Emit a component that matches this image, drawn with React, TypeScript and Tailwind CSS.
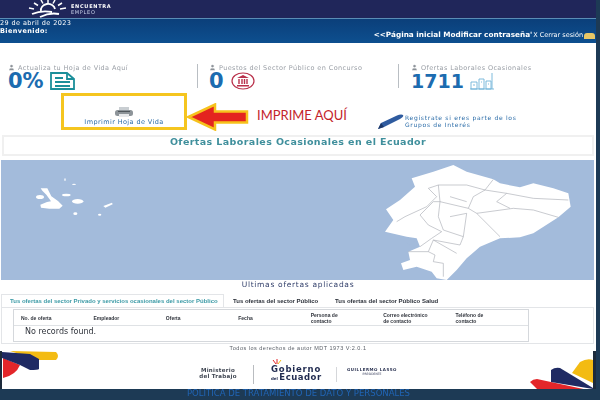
import { User } from "lucide-react"

const columns = [
    ["No. de oferta"],
    ["Empleador"],
    ["Oferta"],
    ["Fecha"],
    ["Persona de", "contacto"],
    ["Correo electrónico", "de contacto"],
    ["Teléfono de", "contacto"],
]

const Sun = () => (
    <svg width="40" height="18" viewBox="0 0 40 18" fill="none" stroke="#fff" strokeWidth="1.5">
        <path d="M13 0l2 3.500M20 0v3.500M27 0l-2 3.500M34 3l-4 2.500M6 3l4 2.500M1 8l5 1M38 8l-6 1" />
        <path d="M13 11a7 6 0 0 1 14-2" strokeWidth="1.800" />
        <path d="M4 14c7-3 15-3 20-2M12 17c6-3 14-4 19-3" strokeWidth="1.800" />
    </svg>
)

const DocIcon = () => (
    <svg width="26" height="18" viewBox="0 0 26 18" fill="none" stroke="#1b8f9a" strokeWidth="1.8">
        <path d="M1 1h16l7 6v10H1z" />
        <path d="M17 1v6h7M5 6h8M5 10h15M5 14h15" />
    </svg>
)

const BankIcon = () => (
    <svg width="24" height="18" viewBox="0 0 24 18" fill="none">
        <ellipse cx="12" cy="9" rx="11" ry="8" stroke="#b9304a" strokeWidth="1.2" />
        <path d="M12 3l6 3H6zM6 13h12v1.500H6z" fill="#b9304a" />
        <path d="M8 7v5M11 7v5M13.500 7v5M16 7v5" stroke="#b9304a" strokeWidth="1.4" />
    </svg>
)

const ChartIcon = () => (
    <svg width="26" height="18" viewBox="0 0 26 18" fill="none" stroke="#6fb3d8" strokeWidth="0.9">
        <path d="M1 17h24M2 10h6v7H2zM10 7h5v10h-5zM17 9h5v8h-5zM23 1v16M4 13h2M12 10h1M19 12h1" />
    </svg>
)

const Printer = () => (
    <svg width="20" height="11" viewBox="0 0 20 11">
        <path d="M5 0h10v3H5z" fill="#c9ced2" />
        <rect x="1" y="3" width="18" height="6" rx="2.5" fill="#8d9499" />
        <path d="M5 7h10v3H5z" fill="#e6e8ea" />
        <path d="M4 4.500h12" stroke="#4f565b" />
    </svg>
)

const Arrow = () => (
    <svg width="62" height="28" viewBox="0 0 62 28" className="mt-[10px]">
        <path d="M1.500 14L28 1.500v7h32v11H28v7z" fill="#e4231f" stroke="#f6c21c" strokeWidth="2.500" />
    </svg>
)

const Pen = () => (
    <svg width="27" height="16" viewBox="0 0 27 16">
        <path d="M1 15l3-6L20 1.500c2-1 5-1.500 6-.5s-1 3-3 4L7 13z" fill="#2f5b9f" />
        <path d="M1 15l3-6 3 4z" fill="#1c3768" />
    </svg>
)

const EcuadorMap = () => (
    <svg className="w-full h-full block" viewBox="0 0 1779 360">
        <rect width="1779" height="360" fill="#a3bbdb" />
        {/* galapagos */}
        <g fill="#fff" transform="translate(-3,-90)">
            <path d="M122 175l20 0 12 24 20 14 14 14-10 9-30 0-25-3-2-9 20-8 12-2-14-20-12-12z" />
            <ellipse cx="120" cy="201" rx="12" ry="6" />
            <ellipse cx="199" cy="195" rx="13" ry="4" />
            <ellipse cx="233" cy="214" rx="17" ry="7" />
            <path d="M310 228l26-10 2 5-22 10z" />
            <ellipse cx="226" cy="251" rx="6" ry="4" />
            <ellipse cx="222" cy="163" rx="6" ry="2" />
            <ellipse cx="299" cy="254" rx="5" ry="3" />
            <ellipse cx="195" cy="149" rx="2" ry="4" />
        </g>
        {/* continente */}
        <g transform="translate(897,-90)">
            <path
                fill="#fff"
                d="M460 105L500 125 580 148 600 160 660 172 700 160 760 175 805 190 812 230 775 262 700 310 660 322 600 325 540 350 500 385 470 420 440 450 410 445 395 425 350 410 310 420 303 400 330 390 325 365 360 350 350 325 320 320 255 305 280 270 258 238 300 210 345 170 335 145 400 125z"
            />
            <path
                fill="none"
                stroke="#a4a8b0"
                strokeWidth="1.800"
                d="M580 148L555 180 500 165 415 165 385 175M555 180L520 200 505 235 530 250 640 235 700 240 775 262M530 250L600 320M505 235L420 215 400 215 360 255 385 285 425 305 395 325 360 350M420 215L415 260 430 300 490 320 480 345 400 330 385 365 405 375 400 395 430 400 430 440M490 320L500 250 450 260M385 175L410 200 380 230 315 260 290 275M555 180L620 190 590 215 630 235M620 190L700 205 805 210M325 365L385 365M470 370L400 330M415 165L420 215M450 200L500 215"
            />
            <path fill="#a3bbdb" d="M320 332l22-6 2 8-14 12-8-4z" />
        </g>
    </svg>
)

const CornerLeft = () => (
    <svg width="60" height="30" viewBox="0 0 60 30">
        <path d="M8 0L54 1Q58 5 54 9L36 9z" fill="#f3bb12" />
        <path d="M1 7L18 14Q14 24 1 27z" fill="#e3262a" />
        <path d="M0 1L28 3 37 8 37 18Q36 19 28 19L18 14 0 7z" fill="#1f2a63" />
    </svg>
)

const CornerRight = () => (
    <svg width="66" height="39" viewBox="0 0 66 39">
        <path d="M45 22L53 11Q60 7 66 9L66 32z" fill="#f3bb12" />
        <path d="M3 31Q6 28 10 28L61 39 11 39z" fill="#e3262a" />
        <path d="M24 19Q28 16 33 17L66 37 66 38 24 31z" fill="#1f2a63" />
    </svg>
)

const GobiernoMark = () => (
    <svg width="10" height="6" viewBox="0 0 10 6">
        <path d="M1 1l3 4M5 0v5" stroke="#e3262a" strokeWidth="1" />
        <path d="M9 1L6 5" stroke="#f3bb12" strokeWidth="1" />
    </svg>
)

export default function App() {
    return (
        <div className="w-[600px] h-[400px] overflow-hidden flex flex-col bg-[#1d3a55] font-['Liberation_Sans',sans-serif]">
            <div className="flex-1 min-h-0 flex flex-col w-[596px]">
                {/* cabecera */}
                <header className="h-[18px] bg-[#20265a] flex items-center pl-[28px] gap-[3px]">
                    <Sun />
                    <div className="text-[5px] leading-[6px] font-bold font-['DejaVu_Sans',sans-serif] tracking-[0.7px] text-white blur-[0.3px]">
                        <div>ENCUENTRA</div>
                        <div className="font-normal text-[#c9d3ea]">EMPLEO</div>
                    </div>
                </header>
                <div className="h-[25px] bg-[linear-gradient(180deg,#0b3f7a,#0d4f8f)] border-t border-[#5a8db5] flex justify-between text-white">
                    <div className="text-[6.500px] leading-[8px] font-['DejaVu_Sans',sans-serif] tracking-[0.4px] blur-[0.3px]">
                        <div>29 de abril de 2023</div>
                        <div className="font-bold">Bienvenido:</div>
                    </div>
                    <div className="flex items-end pb-[4px] pr-[1px] font-['DejaVu_Sans',sans-serif] blur-[0.3px]">
                        <span className="text-[7.300px] font-bold leading-[8px]">&lt;&lt;Página inicial Modificar contraseña'</span>
                        <span className="text-[6.500px] leading-[7px] ml-[1px]">X Cerrar sesión</span>
                        <span className="w-[11px] h-[6px] rounded-t-[3px] bg-[#e8c766] ml-[1px]"></span>
                    </div>
                </div>

                <main className="flex-1 min-h-0 bg-white flex flex-col">
                    {/* indicadores */}
                    <section className="h-[50px] pt-[21px] flex">
                        <div className="w-[198px] pl-[8px] border-r border-[#b9bec3] h-[24px]">
                            <div className="flex items-center gap-[3px] text-[6.500px] leading-[6px] font-['DejaVu_Sans',sans-serif] tracking-[0.4px] text-[#9a9fa6] blur-[0.3px]">
                                <User size={7} fill="#8b9096" strokeWidth={1} /> Actualiza tu Hoja de Vida Aquí
                            </div>
                            <div className="flex items-center gap-[6px] mt-[1px]">
                                <span className="text-[21px] leading-[17px] font-bold font-['DejaVu_Sans',sans-serif] text-[#1c6cb0]">0%</span>
                                <DocIcon />
                            </div>
                        </div>
                        <div className="w-[201px] pl-[11px] border-r border-[#b9bec3] h-[24px]">
                            <div className="flex items-center gap-[3px] text-[6.500px] leading-[6px] font-['DejaVu_Sans',sans-serif] tracking-[0.4px] text-[#9a9fa6] blur-[0.3px]">
                                <User size={7} fill="#8b9096" strokeWidth={1} /> Puestos del Sector Público en Concurso
                            </div>
                            <div className="flex items-center gap-[7px] mt-[1px]">
                                <span className="text-[21px] leading-[17px] font-bold font-['DejaVu_Sans',sans-serif] text-[#1c6cb0]">0</span>
                                <BankIcon />
                            </div>
                        </div>
                        <div className="pl-[12px]">
                            <div className="flex items-center gap-[3px] text-[6.500px] leading-[6px] font-['DejaVu_Sans',sans-serif] tracking-[0.4px] text-[#9a9fa6] blur-[0.3px]">
                                <User size={7} fill="#8b9096" strokeWidth={1} /> Ofertas Laborales Ocasionales
                            </div>
                            <div className="flex items-center gap-[5px] mt-[1px]">
                                <span className="text-[19px] leading-[17px] font-bold font-['DejaVu_Sans',sans-serif] text-[#1c6cb0]">1711</span>
                                <ChartIcon />
                            </div>
                        </div>
                    </section>

                    {/* imprimir */}
                    <section className="h-[37px] flex items-center">
                        <div className="ml-[61px] w-[126px] h-[37px] border-[3px] border-[#f5c51f] flex flex-col items-center pt-[11px] text-[#2b6ca8]">
                            <Printer />
                            <span className="text-[6.500px] leading-[7px] mt-[1px] font-['DejaVu_Sans',sans-serif] tracking-[0.4px] blur-[0.3px] whitespace-nowrap">Imprimir Hoja de Vida</span>
                        </div>
                        <Arrow />
                        <span className="ml-[8px] mt-[6px] text-[13px] leading-[16px] font-['Lato',sans-serif] text-[#c3232b] w-[120px] whitespace-nowrap">IMPRIME AQUÍ</span>
                        <div className="flex items-end mt-[20px]">
                            <Pen />
                            <div className="text-[6px] leading-[7.500px] font-['DejaVu_Sans',sans-serif] tracking-[0.7px] text-[#2b6ca8] ml-[1px] pb-[1px] blur-[0.3px] whitespace-nowrap">
                                <div>Regístrate si eres parte de los</div>
                                <div>Grupos de Interés</div>
                            </div>
                        </div>
                    </section>

                    <div className="mt-[5px] mx-[2px] h-[21px] border-2 border-[#f0f0f0] text-center text-[9.500px] leading-[10px] font-bold font-['DejaVu_Sans',sans-serif] tracking-[0.4px] text-[#3f8f9c] blur-[0.3px]">
                        Ofertas Laborales Ocasionales en el Ecuador
                    </div>

                    <div className="mt-[4px] ml-[1px] mr-[2px] h-[120px]">
                        <EcuadorMap />
                    </div>

                    <div className="h-[14px] text-center text-[7.500px] leading-[8px] pt-[1px] font-['DejaVu_Sans',sans-serif] tracking-[0.7px] text-[#33406b] blur-[0.3px]">
                        Ultimas ofertas aplicadas
                    </div>

                    {/* tabs */}
                    <div className="h-[13px] flex items-end text-[6px] leading-[6px] font-bold text-[#2a2f38] pl-[1px]">
                        <div className="h-[13px] w-[223px] flex items-center pl-[8px] border border-b-0 border-[#e3e5e8] text-[#3b9aa6] blur-[0.2px] whitespace-nowrap">
                            Tus ofertas del sector Privado y servicios ocasionales del sector Público
                        </div>
                        <div className="h-[13px] flex items-center ml-[9px] w-[102px] blur-[0.2px] whitespace-nowrap">Tus ofertas del sector Público</div>
                        <div className="h-[13px] flex items-center blur-[0.2px] whitespace-nowrap">Tus ofertas del sector Público Salud</div>
                    </div>
                    <div className="ml-[1px] mr-[2px] h-[37px] border border-[#e3e5e8] pt-[1px] pl-[11px]">
                        <div className="w-[516px] h-[33px] border border-[#d5d8dc] text-[#30343c]">
                            <div className="grid grid-cols-7 h-[16px] items-center border-b border-[#dfe2e5] pl-[7px] text-[5px] leading-[6px] font-bold blur-[0.2px]">
                                {columns.map((lines) => (
                                    <div key={lines[0]}>
                                        {lines.map((line) => (
                                            <div key={line}>{line}</div>
                                        ))}
                                    </div>
                                ))}
                            </div>
                            <div className="pl-[11px] pt-[1px] text-[8px] leading-[9px] font-['DejaVu_Sans',sans-serif] blur-[0.2px]">No records found.</div>
                        </div>
                    </div>

                    <div className="h-[7px] text-center text-[5.500px] leading-[7px] tracking-[0.5px] text-[#5b6068] blur-[0.3px] pt-[1px]">
                        Todos los derechos de autor MDT 1973 V:2.0.1
                    </div>

                    {/* pie */}
                    <footer className="flex-1 min-h-0 relative border-l-[2px] border-r-[3px] border-[#1d2b3c] flex items-center bg-white overflow-hidden">
                        <div className="absolute left-0 top-0">
                            <CornerLeft />
                        </div>
                        <div className="absolute right-0 top-0">
                            <CornerRight />
                        </div>
                        <div className="ml-[193px] mt-[6px] w-[46px] flex flex-col items-center text-[5.500px] leading-[6.500px] font-bold font-['DejaVu_Sans',sans-serif] tracking-[0.3px] text-[#3d4450] blur-[0.2px] whitespace-nowrap">
                            <div>Ministerio</div>
                            <div>del Trabajo</div>
                        </div>
                        <div className="ml-[12px] mt-[8px] w-px h-[19px] bg-[#b9bcc0]"></div>
                        <div className="relative ml-[17px] mt-[8px] w-[65px] text-[8.500px] leading-[8.500px] font-bold font-['DejaVu_Sans',sans-serif] tracking-[0.8px] text-[#1f2a4f] blur-[0.2px]">
                            <div className="absolute -top-[6px] left-[1px]">
                                <GobiernoMark />
                            </div>
                            <div>Gobierno</div>
                            <div className="whitespace-nowrap tracking-[0.5px]">
                                <span className="text-[4px] tracking-normal">del </span>Ecuador
                            </div>
                        </div>
                        <div className="mt-[8px] w-px h-[15px] bg-[#d5d7da]"></div>
                        <div className="ml-[5px] mt-[3px] w-[60px] flex flex-col items-center text-[3px] leading-[4px] font-bold font-['DejaVu_Sans',sans-serif] text-[#2b3352] blur-[0.2px] whitespace-nowrap">
                            <div className="text-[4px] tracking-[0.5px]">GUILLERMO LASSO</div>
                            <div className="font-normal">PRESIDENTE</div>
                        </div>
                    </footer>
                </main>
            </div>
            <div className="h-[11px] shrink-0 text-center text-[8.500px] leading-[9px] font-['DejaVu_Sans',sans-serif] text-[#2064b4] blur-[0.2px] pr-[3px] whitespace-nowrap">
                POLITICA DE TRATAMIENTO DE DATO Y PERSONALES
            </div>
        </div>
    )
}
